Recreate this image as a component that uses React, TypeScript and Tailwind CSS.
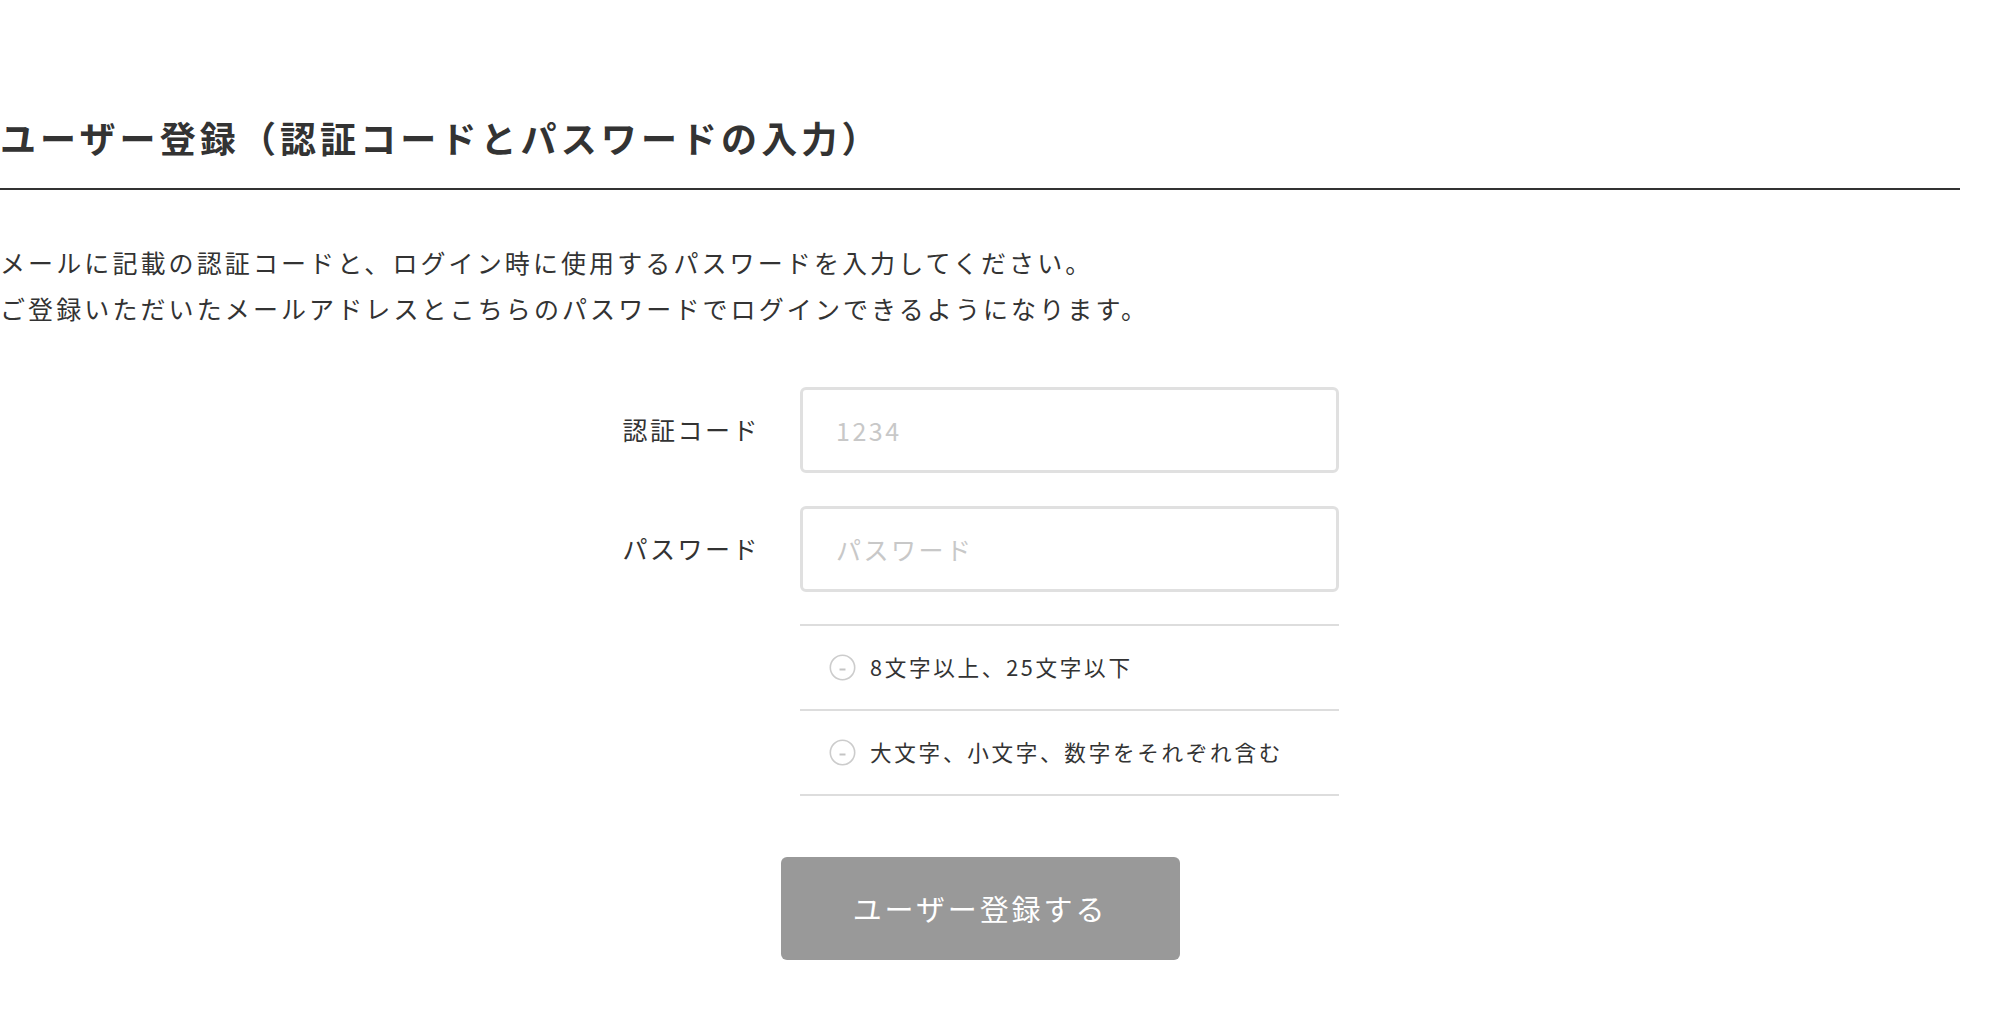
import React, { useState } from 'react';

const MinusCircle = () => (
  <svg width="27" height="27" viewBox="0 0 27 27" className="shrink-0">
    <circle cx="13.5" cy="13.5" r="12.2" fill="none" stroke="#cccccc" strokeWidth="1.6" />
    <line x1="10.5" y1="15.5" x2="16.5" y2="15.5" stroke="#c4c4c4" strokeWidth="2" />
  </svg>
);

const rules = ['8文字以上、25文字以下', '大文字、小文字、数字をそれぞれ含む'];

const App = () => {
  const [code, setCode] = useState('');
  const [password, setPassword] = useState('');

  return (
    <div className="w-[1960px] bg-white pt-[110px] pb-[55px] text-[#333] font-['Noto_Sans_CJK_JP','Noto_Sans',sans-serif]">
      <h1 className="border-b-2 border-[#333] pb-[24px] text-[36px] font-bold leading-[54px] tracking-[4.1px]">
        ユーザー登録（認証コードとパスワードの入力）
      </h1>

      <p className="mt-[49px] text-[25px] leading-[46px] tracking-[3.1px]">
        メールに記載の認証コードと、ログイン時に使用するパスワードを入力してください。
        <br />
        ご登録いただいたメールアドレスとこちらのパスワードでログインできるようになります。
      </p>

      <form className="mx-auto mt-[56px] w-[718px]" onSubmit={(e) => e.preventDefault()}>
        <div className="grid grid-cols-[139px_539px] items-center gap-x-[40px] gap-y-[33px]">
          <label htmlFor="code" className="whitespace-nowrap text-right text-[25px] tracking-[0.1em]">
            認証コード
          </label>
          <input
            id="code"
            type="text"
            placeholder="1234"
            value={code}
            onChange={(e) => setCode(e.target.value)}
            className="h-[86px] w-full rounded-[6px] border-[3px] border-[#e0e0e0] px-[33px] text-[25px] tracking-[0.1em] outline-none placeholder:text-[#c8c8c8]"
          />
          <label htmlFor="password" className="whitespace-nowrap text-right text-[25px] tracking-[0.1em]">
            パスワード
          </label>
          <input
            id="password"
            type="password"
            placeholder="パスワード"
            value={password}
            onChange={(e) => setPassword(e.target.value)}
            className="h-[86px] w-full rounded-[6px] border-[3px] border-[#e0e0e0] px-[33px] text-[25px] tracking-[0.1em] outline-none placeholder:text-[#c8c8c8]"
          />
        </div>

        <ul className="ml-[179px] mt-[32px] w-[539px] border-t-2 border-[#dddddd]">
          {rules.map((rule) => (
            <li key={rule} className="flex h-[85px] items-center gap-[14px] border-b-2 border-[#dddddd] pl-[29px]">
              <MinusCircle />
              <span className="text-[21.6px] tracking-[2.7px]">{rule}</span>
            </li>
          ))}
        </ul>
      </form>

      <div className="mt-[61px] flex justify-center">
        <button
          type="submit"
          disabled
          className="h-[103px] w-[399px] rounded-[6px] bg-[#999999] text-[29px] tracking-[0.1em] text-white"
        >
          ユーザー登録する
        </button>
      </div>
    </div>
  );
};

export default App;
